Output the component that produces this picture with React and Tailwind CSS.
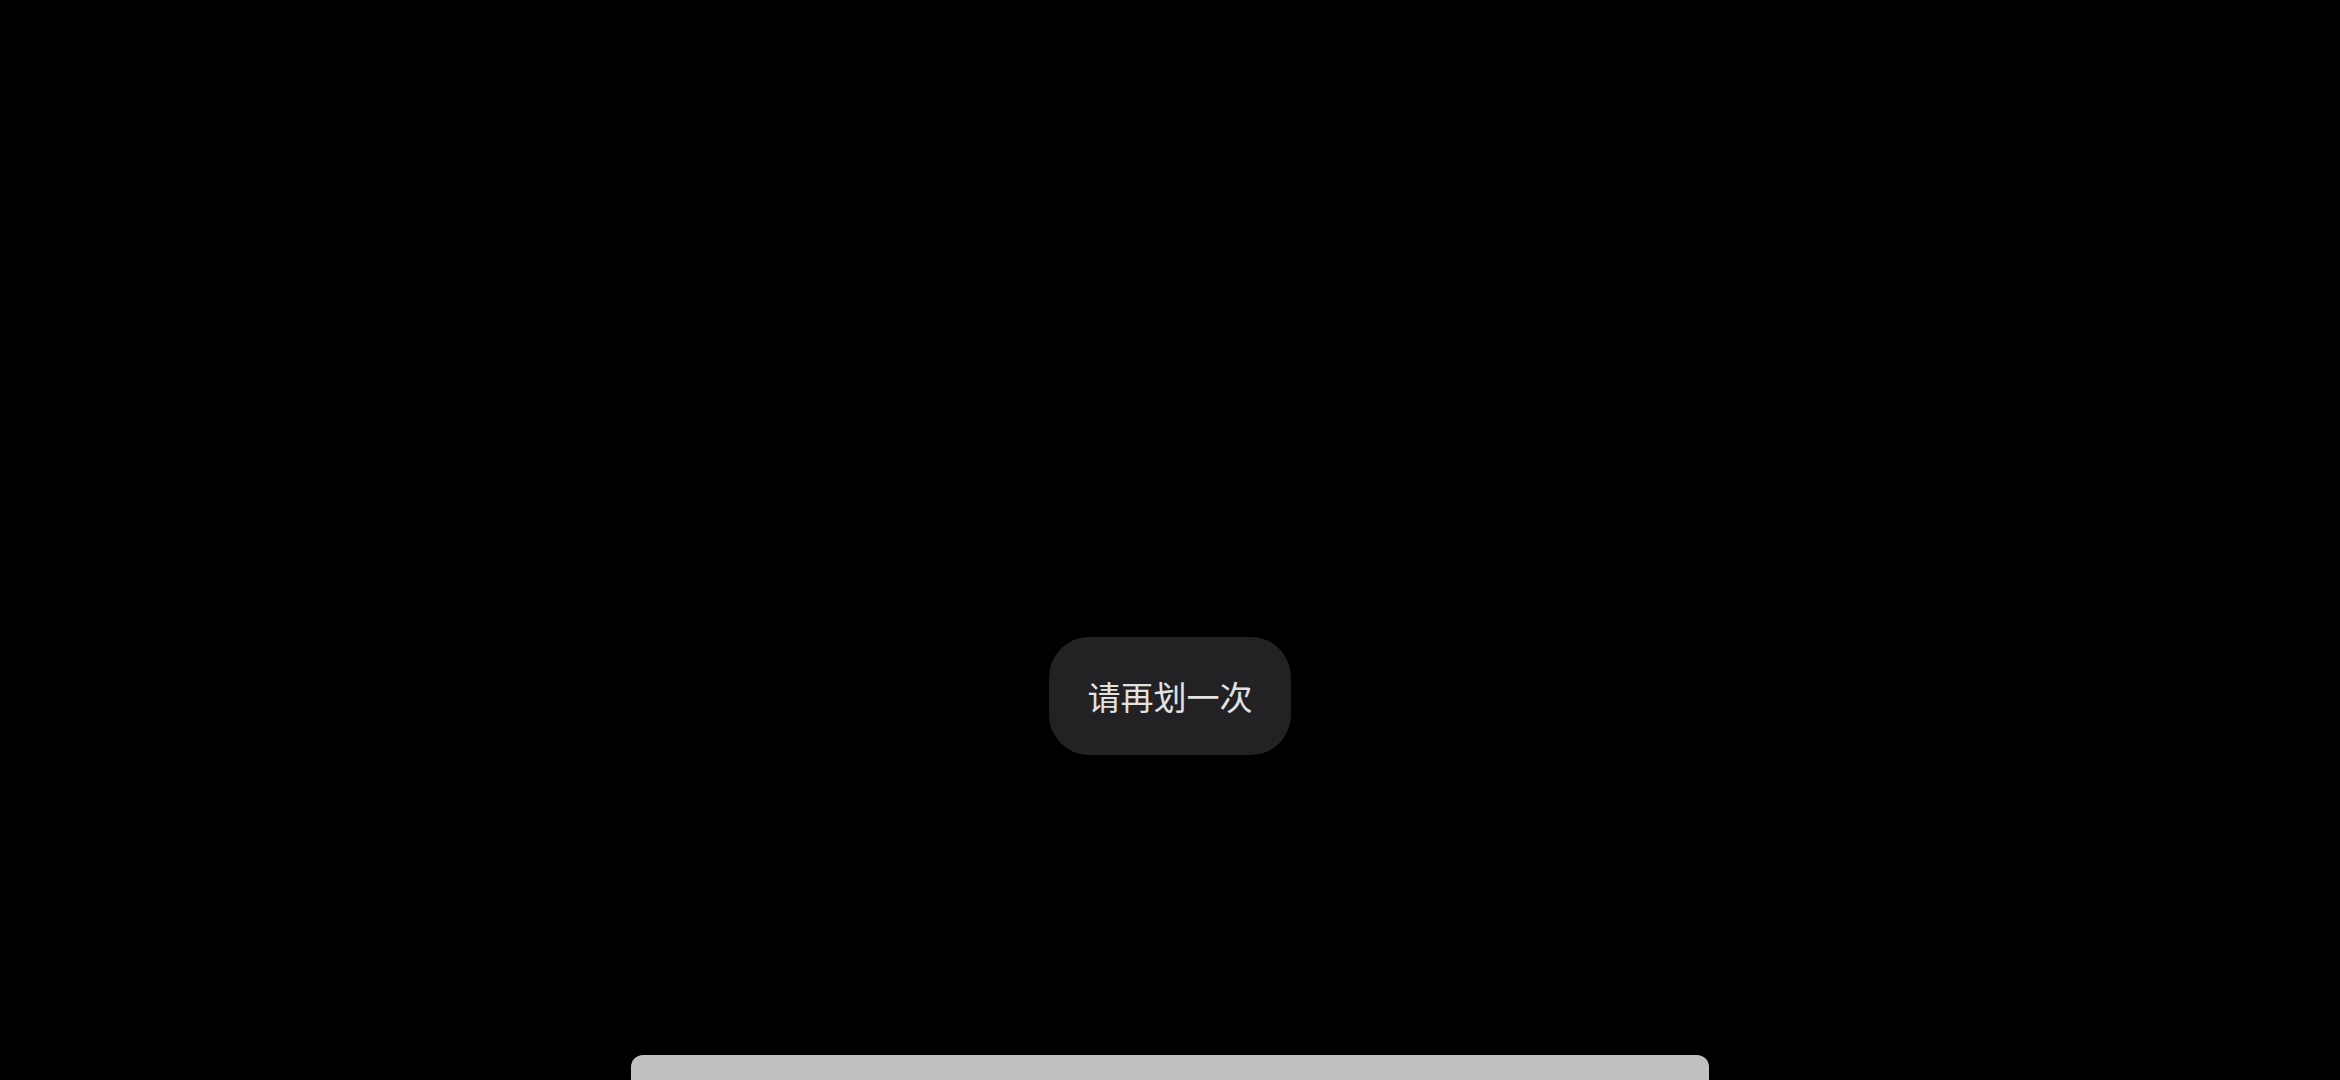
export default function App() {
  return (
    <div className="w-[2340px] h-[1080px] bg-black flex flex-col items-center overflow-hidden">
      <div className="mt-[637px] w-[242px] h-[118px] rounded-[40px] bg-[#222224] flex items-center justify-center">
        <span
          className="text-[33px] leading-none font-normal text-[#e2e2e2]"
          style={{ fontFamily: '"Noto Sans CJK SC", "Noto Sans", sans-serif' }}
        >
          请再划一次
        </span>
      </div>
      <div className="flex-1" />
      <div className="w-[1078px] h-[25px] bg-[#c0c0c0] rounded-t-[12px]" />
    </div>
  )
}
